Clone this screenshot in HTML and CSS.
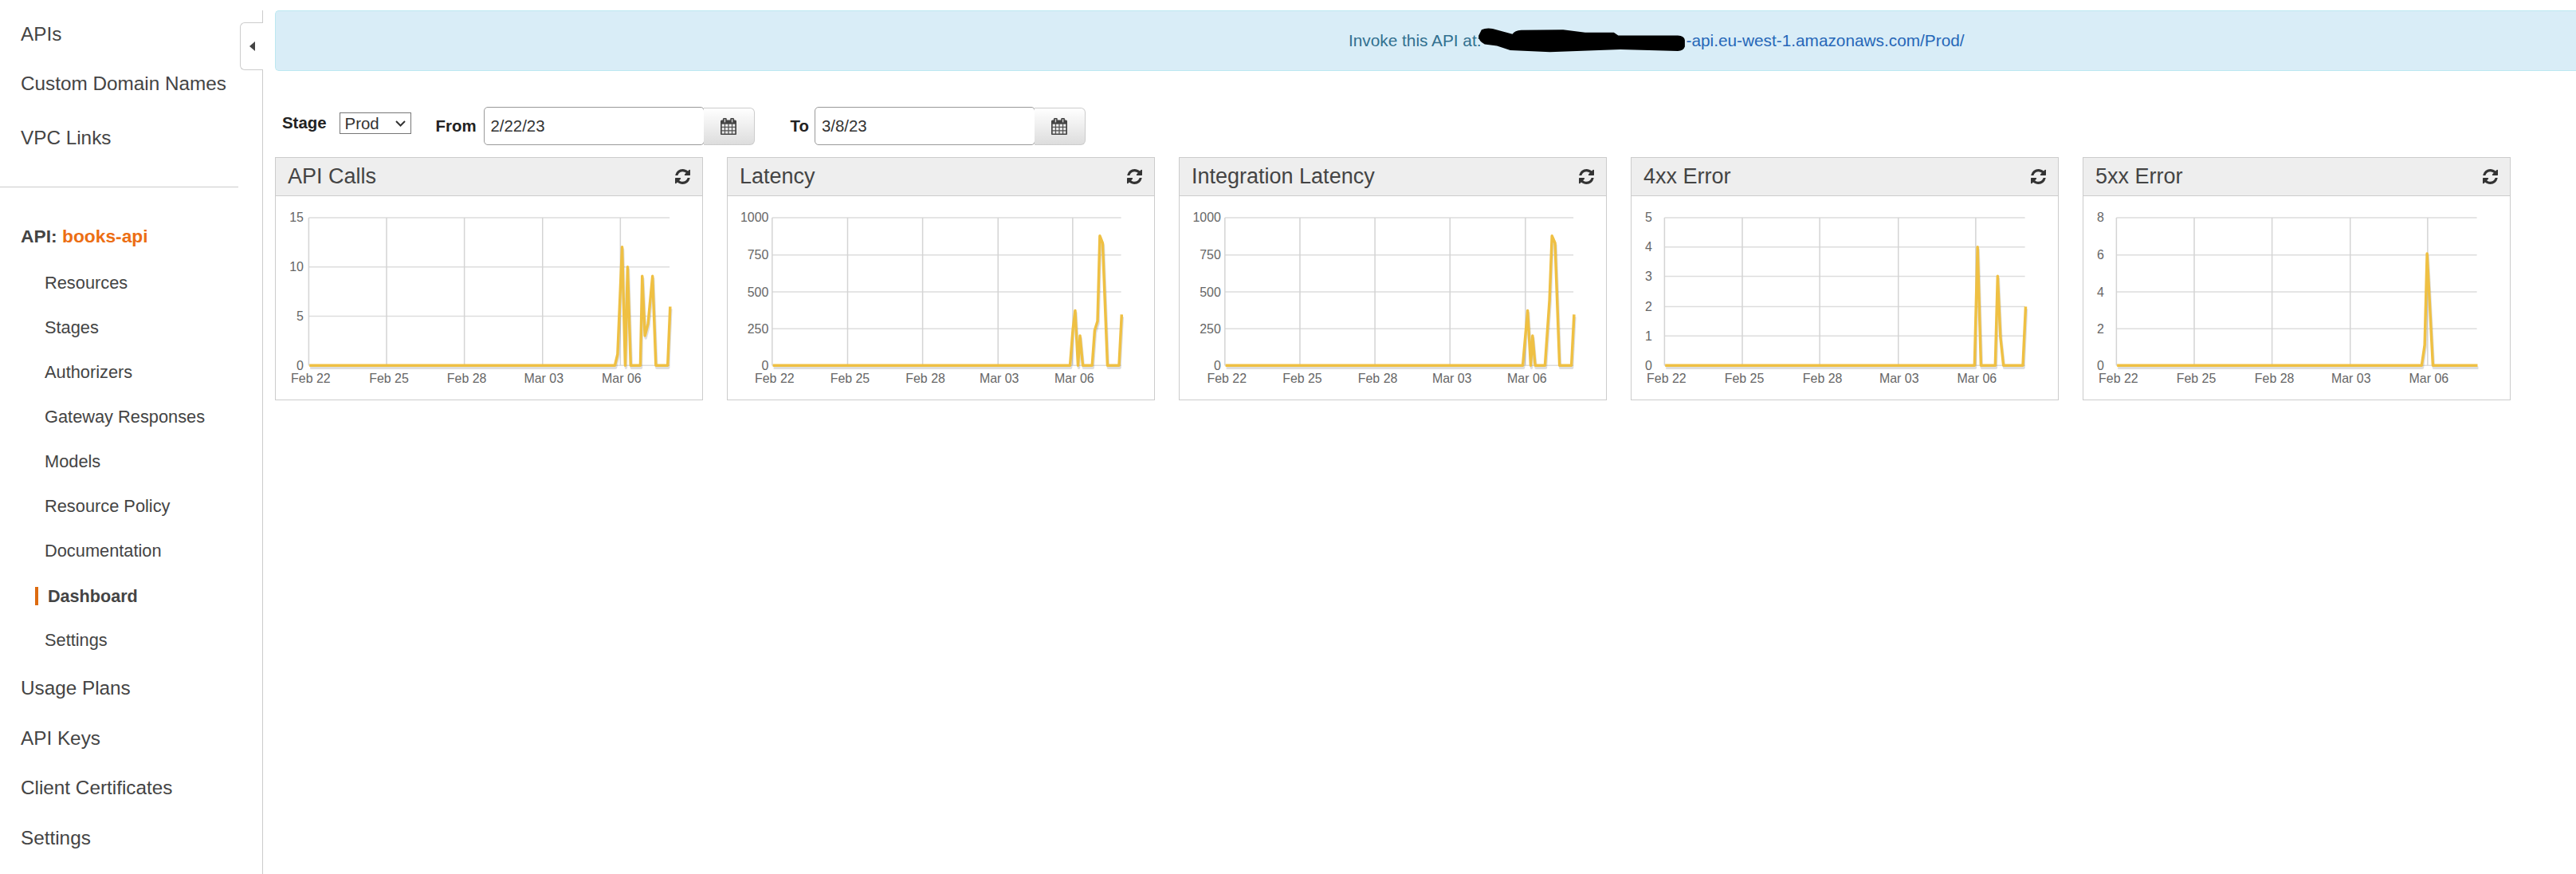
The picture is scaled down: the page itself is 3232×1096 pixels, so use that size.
FILE: index.html
```html
<!DOCTYPE html>
<html lang="en">
<head>
    <meta charset="UTF-8">
    <meta name="viewport" content="width=device-width, initial-scale=1.0">
    <title>API Gateway Dashboard</title>
    <link rel="stylesheet" href="styles.css">
</head>
<body>
    <!-- Shared icons -->
    <svg class="icon-defs" aria-hidden="true">
        <symbol id="icon-refresh" viewBox="128 128 1536 1536">
            <path d="M1639 1056q0 5-1 7-64 268-268 434.5t-478 166.5q-146 0-282.5-55t-243.5-157l-129 129q-19 19-45 19t-45-19-19-45v-448q0-26 19-45t45-19h448q26 0 45 19t19 45-19 45l-137 137q71 66 161 102t187 36q134 0 250-65t186-179q11-17 53-117 8-23 30-23h192q13 0 22.5 9.5t9.5 22.5zm25-800v448q0 26-19 45t-45 19h-448q-26 0-45-19t-19-45 19-45l138-138q-148-137-349-137-134 0-250 65t-186 179q-11 17-53 117-8 23-30 23h-199q-13 0-22.5-9.5t-9.5-22.5v-7q65-268 270-434.5t480-166.5q146 0 284 55.5t245 156.5l130-129q19-19 45-19t45 19 19 45z"/>
        </symbol>
        <symbol id="icon-calendar" viewBox="64 64 1664 1664">
            <path d="M192 1664h288v-288h-288v288zm352 0h320v-288h-320v288zm-352-352h288v-320h-288v320zm352 0h320v-320h-320v320zm-352-384h288v-288h-288v288zm736 736h320v-288h-320v288zm-384-736h320v-288h-320v288zm768 736h288v-288h-288v288zm-384-352h320v-320h-320v320zm-352-864v-288q0-13-9.5-22.5t-22.5-9.5h-64q-13 0-22.5 9.5t-9.5 22.5v288q0 13 9.5 22.5t22.5 9.5h64q13 0 22.5-9.5t9.5-22.5zm736 864h288v-320h-288v320zm-384-384h320v-288h-320v288zm384 0h288v-288h-288v288zm32-480v-288q0-13-9.5-22.5t-22.5-9.5h-64q-13 0-22.5 9.5t-9.5 22.5v288q0 13 9.5 22.5t22.5 9.5h64q13 0 22.5-9.5t9.5-22.5zm384-64v1280q0 52-38 90t-90 38h-1408q-52 0-90-38t-38-90v-1280q0-52 38-90t90-38h128v-96q0-66 47-113t113-47h64q66 0 113 47t47 113v96h384v-96q0-66 47-113t113-47h64q66 0 113 47t47 113v96h128q52 0 90 38t38 90z"/>
        </symbol>
    </svg>

    <!-- Left navigation -->
    <aside class="sidebar">
        <button class="collapse-tab" type="button" aria-label="Collapse"><span class="collapse-arrow"></span></button>

        <ul class="nav-top">
            <li class="nav-item">APIs</li>
            <li class="nav-item">Custom Domain Names</li>
            <li class="nav-item">VPC Links</li>
        </ul>

        <hr class="nav-divider">

        <div class="nav-api"><b>API:</b> <b class="api-name">books-api</b></div>
        <ul class="nav-sub">
            <li class="sub-item">Resources</li>
            <li class="sub-item">Stages</li>
            <li class="sub-item">Authorizers</li>
            <li class="sub-item">Gateway Responses</li>
            <li class="sub-item">Models</li>
            <li class="sub-item">Resource Policy</li>
            <li class="sub-item">Documentation</li>
            <li class="sub-item sub-active"><span>Dashboard</span></li>
            <li class="sub-item">Settings</li>
        </ul>

        <ul class="nav-bottom">
            <li class="nav-item">Usage Plans</li>
            <li class="nav-item">API Keys</li>
            <li class="nav-item">Client Certificates</li>
            <li class="nav-item">Settings</li>
        </ul>
    </aside>

    <main class="content">
        <div class="alert">
            <span>Invoke this API at:</span>
            <!-- Scribbled-out part of the URL -->
            <svg class="redaction" viewBox="378 105 470 92" preserveAspectRatio="none" aria-hidden="true">
                <path d="M385 112Q395 104 410 108L455 128Q460 114 475 113L570 112L620 122L685 122L695 133L830 133Q845 135 846 150L846 175Q843 190 830 191L700 185L540 195L450 188L420 172L392 166Q378 155 378 135Z"/>
            </svg><a class="alert-link" href="#">-api.eu-west-1.amazonaws.com/Prod/</a>
        </div>

        <!-- Stage and date range -->
        <form class="filters">
            <div class="stage-group">
                <label class="filter-label" for="stage">Stage</label>
                <select id="stage" class="stage-select">
                    <option>Prod</option>
                </select>
            </div>

            <label class="filter-label from-label" for="dateFrom">From</label>
            <div class="date-group">
                <input id="dateFrom" class="date-input" type="text" value="2/22/23">
                <button class="date-button" type="button" aria-label="Pick date"><svg class="icon-calendar"><use href="#icon-calendar"/></svg></button>
            </div>

            <label class="filter-label to-label" for="dateTo">To</label>
            <div class="date-group date-group-to">
                <input id="dateTo" class="date-input" type="text" value="3/8/23">
                <button class="date-button" type="button" aria-label="Pick date"><svg class="icon-calendar"><use href="#icon-calendar"/></svg></button>
            </div>
        </form>

        <!-- Metric cards -->
        <section class="cards">
            <article class="card">
                <header class="card-head">
                    <h3 class="card-title">API Calls</h3>
                    <svg class="icon-refresh"><use href="#icon-refresh"/></svg>
                </header>
                <svg class="chart" viewBox="0 0 535 256">
                    <path class="grid-h" d="M40.5 27H495M40.5 89H495M40.5 151H495M40.5 213H495"/>
                    <path class="grid-v" d="M40.5 27V213M138.5 27V213M236.5 27V213M335 27V213M433 27V213"/>
                    <g class="tick-y">
                        <text x="34" y="32.5">15</text><text x="34" y="94.5">10</text><text x="34" y="156.5">5</text><text x="34" y="218.5">0</text>
                    </g>
                    <g class="tick-x">
                        <text x="43" y="235">Feb 22</text><text x="141.5" y="235">Feb 25</text><text x="239.5" y="235">Feb 28</text><text x="336.5" y="235">Mar 03</text><text x="434.5" y="235">Mar 06</text>
                    </g>
                    <polyline class="series-shadow" points="40.5,213 425.3,213 428.7,199 434.4,64 438.3,213 441.3,89 445.2,213 457.4,213 459.7,100.7 463.1,175.7 467,160.7 472.7,100.7 476.9,213 491.8,213 494.9,139"/>
                    <polyline class="series" points="40.5,213 425.3,213 428.7,199 434.4,64 438.3,213 441.3,89 445.2,213 457.4,213 459.7,100.7 463.1,175.7 467,160.7 472.7,100.7 476.9,213 491.8,213 494.9,139"/>
                </svg>
            </article>

            <article class="card">
                <header class="card-head">
                    <h3 class="card-title">Latency</h3>
                    <svg class="icon-refresh"><use href="#icon-refresh"/></svg>
                </header>
                <svg class="chart" viewBox="0 0 535 256">
                    <path class="grid-h" d="M55 27H494.5M55 74H494.5M55 120.5H494.5M55 167H494.5M55 213H494.5"/>
                    <path class="grid-v" d="M55 27V213M150 27V213M244.5 27V213M339.5 27V213M433.5 27V213"/>
                    <g class="tick-y">
                        <text x="50.5" y="32.5">1000</text><text x="50.5" y="79.5">750</text><text x="50.5" y="126">500</text><text x="50.5" y="172.5">250</text><text x="50.5" y="218.5">0</text>
                    </g>
                    <g class="tick-x">
                        <text x="58" y="235">Feb 22</text><text x="153" y="235">Feb 25</text><text x="248" y="235">Feb 28</text><text x="341" y="235">Mar 03</text><text x="435.5" y="235">Mar 06</text>
                    </g>
                    <polyline class="series-shadow" points="55,213 429.4,213 433,167.3 435.8,144 439.4,213 441.9,175.7 445.4,213 457.2,213 460.4,169 464,157.3 466.9,50 470.4,59 476.5,213 491.1,213 494.4,149"/>
                    <polyline class="series" points="55,213 429.4,213 433,167.3 435.8,144 439.4,213 441.9,175.7 445.4,213 457.2,213 460.4,169 464,157.3 466.9,50 470.4,59 476.5,213 491.1,213 494.4,149"/>
                </svg>
            </article>

            <article class="card">
                <header class="card-head">
                    <h3 class="card-title">Integration Latency</h3>
                    <svg class="icon-refresh"><use href="#icon-refresh"/></svg>
                </header>
                <svg class="chart" viewBox="0 0 535 256">
                    <path class="grid-h" d="M56 27H495M56 74H495M56 120.5H495M56 167H495M56 213H495"/>
                    <path class="grid-v" d="M56 27V213M150.5 27V213M245 27V213M339.5 27V213M434.5 27V213"/>
                    <g class="tick-y">
                        <text x="51" y="32.5">1000</text><text x="51" y="79.5">750</text><text x="51" y="126">500</text><text x="51" y="172.5">250</text><text x="51" y="218.5">0</text>
                    </g>
                    <g class="tick-x">
                        <text x="58.5" y="235">Feb 22</text><text x="153.5" y="235">Feb 25</text><text x="248.5" y="235">Feb 28</text><text x="342" y="235">Mar 03</text><text x="436.5" y="235">Mar 06</text>
                    </g>
                    <polyline class="series-shadow" points="56,213 430.4,213 436.5,144 440.4,213 442.7,175.7 446,213 458.4,213 464.1,130.7 467.2,50 471,59 476.7,213 491.7,213 495,149"/>
                    <polyline class="series" points="56,213 430.4,213 436.5,144 440.4,213 442.7,175.7 446,213 458.4,213 464.1,130.7 467.2,50 471,59 476.7,213 491.7,213 495,149"/>
                </svg>
            </article>

            <article class="card">
                <header class="card-head">
                    <h3 class="card-title">4xx Error</h3>
                    <svg class="icon-refresh"><use href="#icon-refresh"/></svg>
                </header>
                <svg class="chart" viewBox="0 0 535 256">
                    <path class="grid-h" d="M40.5 27H494.5M40.5 64H494.5M40.5 101H494.5M40.5 139H494.5M40.5 176H494.5M40.5 213H494.5"/>
                    <path class="grid-v" d="M40.5 27V213M138.5 27V213M236 27V213M335 27V213M432.5 27V213"/>
                    <g class="tick-y">
                        <text x="25" y="32.5">5</text><text x="25" y="69.5">4</text><text x="25" y="106.5">3</text><text x="25" y="144.5">2</text><text x="25" y="181.5">1</text><text x="25" y="218.5">0</text>
                    </g>
                    <g class="tick-x">
                        <text x="43" y="235">Feb 22</text><text x="141" y="235">Feb 25</text><text x="239.5" y="235">Feb 28</text><text x="336" y="235">Mar 03</text><text x="434" y="235">Mar 06</text>
                    </g>
                    <polyline class="series-shadow" points="40.5,213 430.2,213 434,64 438.3,213 456.3,213 459.3,100.7 462.8,177.3 466.6,213 491.1,213 494.6,139"/>
                    <polyline class="series" points="40.5,213 430.2,213 434,64 438.3,213 456.3,213 459.3,100.7 462.8,177.3 466.6,213 491.1,213 494.6,139"/>
                </svg>
            </article>

            <article class="card">
                <header class="card-head">
                    <h3 class="card-title">5xx Error</h3>
                    <svg class="icon-refresh"><use href="#icon-refresh"/></svg>
                </header>
                <svg class="chart" viewBox="0 0 535 256">
                    <path class="grid-h" d="M40.5 27H494.5M40.5 74H494.5M40.5 120.5H494.5M40.5 167H494.5M40.5 213H494.5"/>
                    <path class="grid-v" d="M40.5 27V213M138.5 27V213M236.5 27V213M335 27V213M432.5 27V213"/>
                    <g class="tick-y">
                        <text x="25" y="32.5">8</text><text x="25" y="79.5">6</text><text x="25" y="126">4</text><text x="25" y="172.5">2</text><text x="25" y="218.5">0</text>
                    </g>
                    <g class="tick-x">
                        <text x="43" y="235">Feb 22</text><text x="141" y="235">Feb 25</text><text x="239.5" y="235">Feb 28</text><text x="336" y="235">Mar 03</text><text x="434" y="235">Mar 06</text>
                    </g>
                    <polyline class="series-shadow" points="40.5,213 424.2,213 428,187.3 431,72.3 438.3,213 494.6,213"/>
                    <polyline class="series" points="40.5,213 424.2,213 428,187.3 431,72.3 438.3,213 494.6,213"/>
                </svg>
            </article>
        </section>
    </main>
</body>
</html>
```

FILE: styles.css
```css
* {
    box-sizing: border-box;
}
html, body {
    height: 100%;
}
body {
    margin: 0;
    display: flex;
    overflow: hidden;
    font-family: "Liberation Sans", Arial, sans-serif;
    color: #444;
    background: #fff;
}
ul {
    list-style: none;
    margin: 0;
    padding: 0;
}
.icon-defs {
    display: none;
}

/* Sidebar */
.sidebar {
    position: relative;
    flex: 0 0 330px;
    margin-top: 13px;
    padding-top: 13px;
    border-right: 1px solid #ccc;
}
.collapse-tab {
    position: absolute;
    top: 15px;
    right: -1px;
    width: 29px;
    height: 60px;
    padding: 0;
    display: flex;
    align-items: center;
    justify-content: center;
    background: #fff;
    border: 1px solid #ccc;
    border-right: none;
    border-radius: 6px 0 0 6px;
}
.collapse-arrow {
    width: 0;
    height: 0;
    border-top: 6px solid transparent;
    border-bottom: 6px solid transparent;
    border-right: 7px solid #444;
}
.nav-item {
    padding-left: 26px;
    font-size: 24.3px;
    line-height: 34px;
}
.nav-top .nav-item:nth-child(2) {
    margin-top: 28px;
}
.nav-top .nav-item:nth-child(3) {
    margin-top: 34px;
}
.nav-divider {
    width: 299px;
    height: 1px;
    margin: 44px 0;
    border: none;
    background: #ccc;
}
.nav-api {
    padding-left: 26px;
    font-size: 22.8px;
    line-height: 34px;
}
.api-name {
    color: #ec6e13;
}
.nav-sub {
    margin-top: 25px;
    display: flex;
    flex-direction: column;
    gap: 22px;
}
.sub-item {
    padding-left: 56px;
    font-size: 21.8px;
    line-height: 34px;
}
.sub-active {
    display: flex;
    align-items: center;
    padding-left: 44px;
    height: 34px;
    font-size: 21.6px;
    font-weight: bold;
}
.sub-active span {
    padding-left: 12px;
    border-left: 4px solid #dd6b10;
    line-height: 23px;
}
.nav-bottom {
    margin-top: 26px;
    display: flex;
    flex-direction: column;
    gap: 28.7px;
}

/* Main area */
.content {
    flex: 1;
    min-width: 0;
    padding: 13px 0 0 15px;
}
.alert {
    display: flex;
    align-items: center;
    height: 76px;
    padding-left: 1346px;
    font-size: 20.8px;
    color: #31708f;
    background: #d9edf7;
    border: 1px solid #bce8f1;
    border-right: none;
    border-radius: 5px 0 0 5px;
    white-space: nowrap;
}
.redaction {
    flex: none;
    width: 260px;
    height: 31px;
    margin: -1px 0 0 -3px;
    fill: #000;
}
.alert-link {
    color: #2667b8;
    text-decoration: none;
}

/* Filters */
.filters {
    display: flex;
    align-items: center;
    height: 48px;
    margin-top: 45px;
    padding-left: 9px;
    font-size: 20.4px;
    color: #333;
}
.filter-label {
    font-weight: bold;
    color: #222;
}
.stage-group {
    display: flex;
    align-items: center;
    gap: 16px;
    margin-bottom: 7px;
}
.stage-select {
    width: 90px;
    height: 27px;
    padding: 0 0 0 6px;
    font: inherit;
    color: #333;
    appearance: none;
    background: #fff url("data:image/svg+xml,%3Csvg xmlns='http://www.w3.org/2000/svg' width='13' height='8'%3E%3Cpath d='M1 1l5.500 5.500L12 1' fill='none' stroke='%23333' stroke-width='2'/%3E%3C/svg%3E") no-repeat 69px 9px;
    border: 1px solid #777;
    border-radius: 0;
}
.from-label {
    margin-left: 31px;
}
.to-label {
    margin-left: 45px;
}
.date-group {
    display: flex;
    height: 48px;
    margin-left: 9px;
}
.date-group-to {
    margin-left: 7px;
}
.date-input {
    width: 277px;
    padding: 0 8px;
    font: inherit;
    color: #333;
    background: #fff;
    border: 1px solid #999;
    border-radius: 5px;
}
.date-button {
    width: 64px;
    margin: 1px 0 0 -1px;
    padding: 0;
    display: flex;
    align-items: center;
    justify-content: center;
    background: linear-gradient(#fff, #ddd);
    border: 1px solid #ccc;
    border-left: none;
    border-radius: 0 6px 6px 0;
}
.icon-calendar {
    width: 20px;
    height: 21px;
    fill: #444;
    stroke: #444;
    stroke-width: 30;
}

/* Metric cards */
.cards {
    display: flex;
    gap: 30px;
    margin-top: 15px;
}
.card {
    flex: 0 0 537px;
    height: 305px;
    border: 1px solid #ccc;
}
.card-head {
    display: flex;
    align-items: center;
    justify-content: space-between;
    height: 48px;
    padding: 0 15px;
    background: #eee;
    border-bottom: 1px solid #ccc;
}
.card-title {
    margin: 0;
    font-size: 27px;
    font-weight: normal;
    color: #444;
}
.icon-refresh {
    width: 19px;
    height: 19px;
    fill: #333;
}
.chart {
    display: block;
    width: 535px;
    height: 255px;
}
.grid-h, .grid-v {
    fill: none;
    stroke: #ddd;
    stroke-width: 1.5;
}
.grid-v {
    stroke: #d4d4d4;
}
.tick-y text, .tick-x text {
    font-size: 16px;
    fill: #666;
}
.tick-y text {
    text-anchor: end;
}
.tick-x text {
    text-anchor: middle;
}
.series, .series-shadow {
    fill: none;
    stroke-width: 3.5px;
    stroke-linejoin: round;
}
.series {
    stroke: #efc043;
    transform: translateX(0.8px);
}
.series-shadow {
    stroke: #000;
    stroke-opacity: 0.13;
    transform: translate(1.8px, 3px);
}
```
